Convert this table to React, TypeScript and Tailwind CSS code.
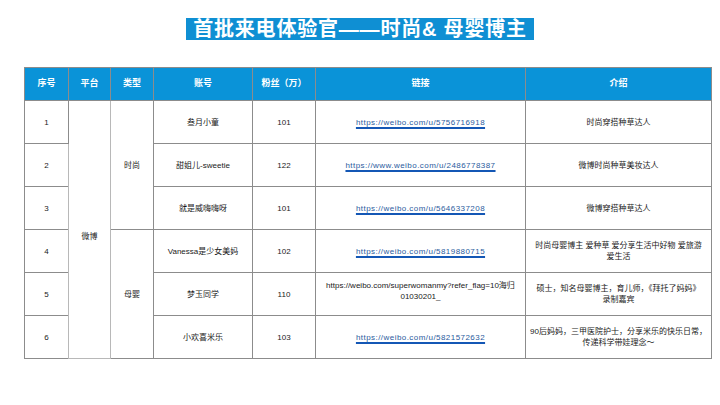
import React from "react";

type Row = {
  no: string;
  account: string;
  fans: string;
  link: React.ReactNode;
  isLink: boolean;
  intro: React.ReactNode;
};

const rows: Row[] = [
  { no: "1", account: "叁月小童", fans: "101", link: "https://weibo.com/u/5756716918", isLink: true, intro: "时尚穿搭种草达人" },
  { no: "2", account: "甜姐儿-sweetie", fans: "122", link: "https://www.weibo.com/u/2486778387", isLink: true, intro: "微博时尚种草美妆达人" },
  { no: "3", account: "就是威嗨嗨呀", fans: "101", link: "https://weibo.com/u/5646337208", isLink: true, intro: "微博穿搭种草达人" },
  {
    no: "4",
    account: "Vanessa是少女美妈",
    fans: "102",
    link: "https://weibo.com/u/5819880715",
    isLink: true,
    intro: (
      <>
        时尚母婴博主 爱种草 爱分享生活中好物 爱旅游
        <br />
        爱生活
      </>
    ),
  },
  {
    no: "5",
    account: "梦玉同学",
    fans: "110",
    link: (
      <>
        https://weibo.com/superwomanmy?refer_flag=10海归
        <br />
        01030201_
      </>
    ),
    isLink: false,
    intro: (
      <>
        硕士，知名母婴博主，育儿师，《拜托了妈妈》
        <br />
        录制嘉宾
      </>
    ),
  },
  {
    no: "6",
    account: "小欢喜米乐",
    fans: "103",
    link: "https://weibo.com/u/5821572632",
    isLink: true,
    intro: (
      <>
        90后妈妈，三甲医院护士，分享米乐的快乐日常，
        <br />
        传递科学带娃理念～
      </>
    ),
  },
];

const cell = "border border-[#8c8c8c] text-center align-middle p-0";

export default function App() {
  return (
    <div
      className="w-[720px] h-[405px] bg-white overflow-hidden"
      style={{ fontFamily: '"Liberation Sans", "Noto Sans CJK SC", sans-serif' }}
    >
      {/* 标题 */}
      <div className="flex justify-center pt-[18px]">
        <div className="w-[348px] h-[22px] bg-[#0f8fd3] flex items-center justify-center">
          <span className="text-white text-[20px] font-bold leading-none tracking-[0.8px]">
            首批来电体验官——时尚&amp; 母婴博主
          </span>
        </div>
      </div>

      {/* 表格 */}
      <div className="mt-[27px] ml-[24px] w-[687px]">
        <table className="w-full table-fixed border-collapse text-[#1a1a1a]">
          <colgroup>
            <col className="w-[44px]" />
            <col className="w-[42px]" />
            <col className="w-[43px]" />
            <col className="w-[99px]" />
            <col className="w-[63px]" />
            <col className="w-[210px]" />
            <col className="w-[186px]" />
          </colgroup>
          <thead>
            <tr className="h-[33px] bg-[#0a93d8] text-white text-[9px] font-bold">
              {["序号", "平台", "类型", "账号", "粉丝（万）", "链接", "介绍"].map((h) => (
                <th key={h} className={`${cell} font-bold`}>
                  {h}
                </th>
              ))}
            </tr>
          </thead>
          <tbody className="text-[8px] leading-[11px]">
            {rows.map((r, i) => (
              <tr key={r.no} className="h-[43px]">
                <td className={cell}>{r.no}</td>
                {i === 0 && (
                  <td rowSpan={6} className={`${cell} border-[#b8b8b8] pt-[14px]`}>
                    微博
                  </td>
                )}
                {i === 0 && (
                  <td rowSpan={3} className={cell}>
                    时尚
                  </td>
                )}
                {i === 3 && (
                  <td rowSpan={3} className={cell}>
                    母婴
                  </td>
                )}
                <td className={cell}>{r.account}</td>
                <td className={cell}>{r.fans}</td>
                <td className={cell}>
                  {r.isLink ? (
                    <span className="text-[#2a5b9e] underline decoration-[#1457b5] decoration-[1.5px] underline-offset-[2px] tracking-[0.45px]">
                      {r.link}
                    </span>
                  ) : (
                    <span className="block whitespace-nowrap pb-[6px]">{r.link}</span>
                  )}
                </td>
                <td className={`${cell} px-[1px]`}>{r.intro}</td>
              </tr>
            ))}
          </tbody>
        </table>
      </div>
    </div>
  );
}
